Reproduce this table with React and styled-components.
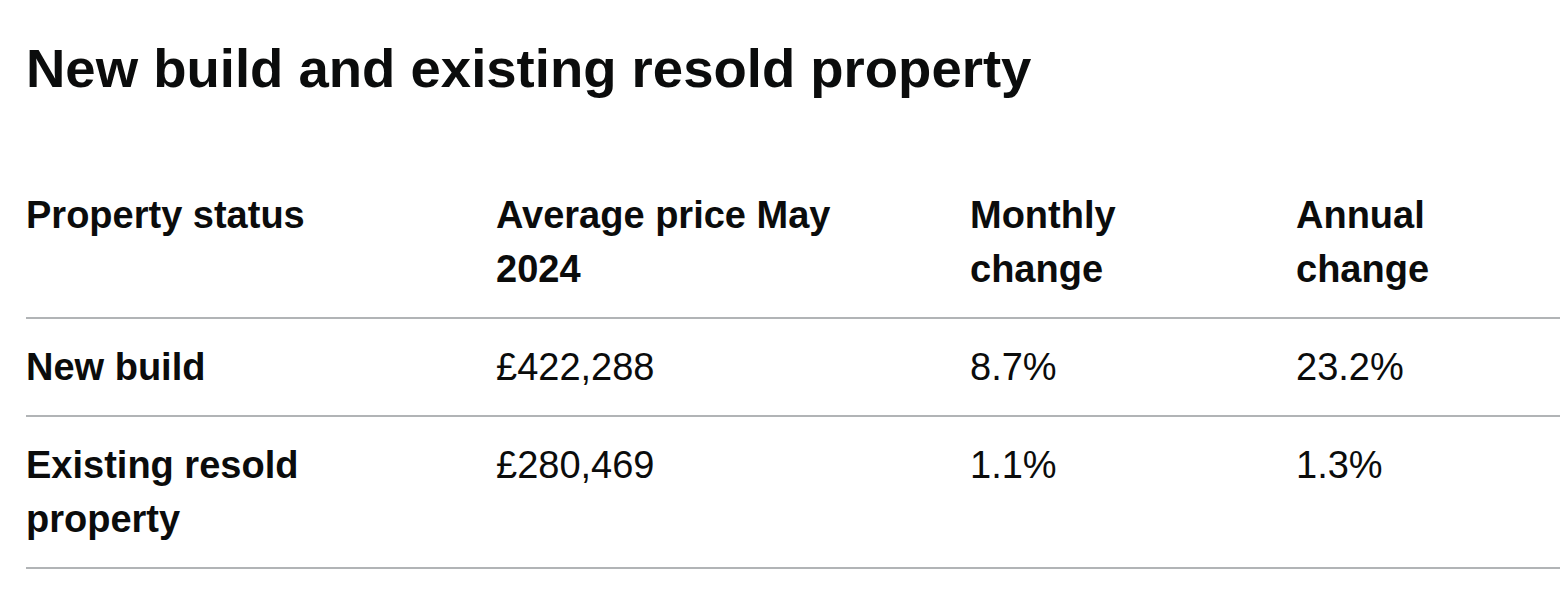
import React from 'react';
import styled, { createGlobalStyle } from 'styled-components';

const GlobalStyle = createGlobalStyle`
    body {
        margin: 0;
        background: #ffffff;
        color: #0b0c0c;
        font-family: "Liberation Sans", Arial, sans-serif;
    }
`;

const Page = styled.div`
    padding: 36px 8px 0 26px;
`;

const Title = styled.h2`
    margin: 0 0 65px;
    font-size: 54.5px;
    line-height: 66px;
    font-weight: 700;
`;

const Table = styled.table`
    width: 100%;
    border-collapse: collapse;
    border-spacing: 0;
    table-layout: fixed;
`;

const Cell = styled.td`
    padding: 21px 60px 21px 0;
    border-bottom: 2px solid #b1b4b6;
    font-size: 38px;
    line-height: 54px;
    text-align: left;
    vertical-align: top;
    font-weight: ${(p) => (p.$bold ? 700 : 400)};
`;

const HeadCell = styled(Cell).attrs({ as: 'th' })`
    font-weight: 700;
`;

const columns = [470, 474, 326, null];

const headers = ['Property status', 'Average price May 2024', 'Monthly change', 'Annual change'];

const rows = [
    ['New build', '£422,288', '8.7%', '23.2%'],
    ['Existing resold property', '£280,469', '1.1%', '1.3%'],
];

export default function App() {
    return (
        <>
            <GlobalStyle />
            <Page>
                <Title>New build and existing resold property</Title>
                <Table>
                    <colgroup>
                        {columns.map((w, i) => (
                            <col key={i} style={w ? { width: w } : undefined} />
                        ))}
                    </colgroup>
                    <thead>
                        <tr>
                            {headers.map((h) => (
                                <HeadCell key={h} scope="col">{h}</HeadCell>
                            ))}
                        </tr>
                    </thead>
                    <tbody>
                        {rows.map((r) => (
                            <tr key={r[0]}>
                                {r.map((c, i) => (
                                    <Cell key={i} $bold={i === 0}>{c}</Cell>
                                ))}
                            </tr>
                        ))}
                    </tbody>
                </Table>
            </Page>
        </>
    );
}
